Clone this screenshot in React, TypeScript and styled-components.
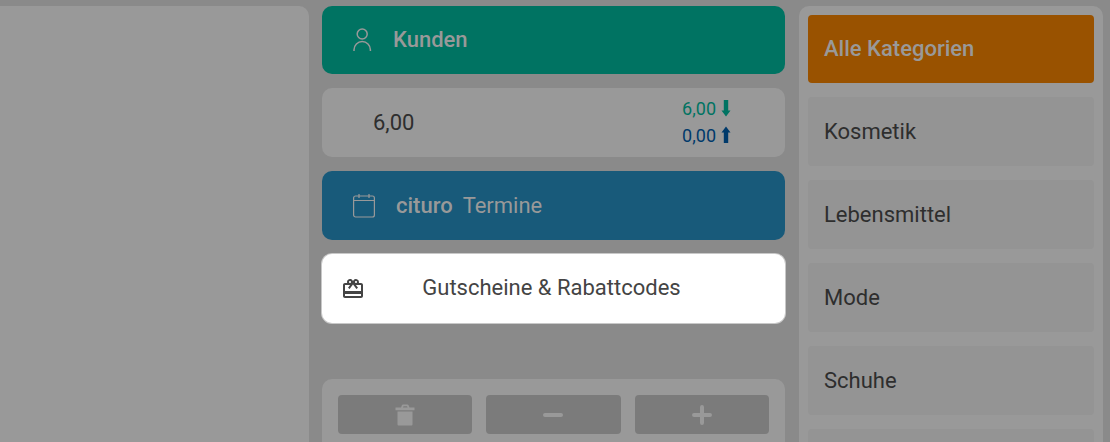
import React from "react";
import styled, { createGlobalStyle } from "styled-components";
import { MdRedeem } from "react-icons/md";

const GlobalStyle = createGlobalStyle`
  *, *::before, *::after { box-sizing: border-box; }
  body {
    margin: 0;
    background: #8a8a8a;
    color: #2e2e2e;
    font-family: Roboto, "Liberation Sans", sans-serif;
    overflow: hidden;
  }
  button { font: inherit; color: inherit; border: 0; cursor: pointer; }
  svg { display: block; flex: none; }
`;

const Page = styled.main`
  display: grid;
  grid-template-columns: 309fr 464fr 304fr;
  column-gap: 13px;
  height: 100vh;
  padding: 6px 7px 0 0;
`;

const Receipt = styled.section`
  background: #999;
  border-radius: 0 10px 0 0;
`;

const Middle = styled.div`
  display: flex;
  flex-direction: column;
  gap: 14px;
  min-width: 0;
  min-height: 0;
  padding-right: 1px;
`;

const ActionButton = styled.button<{ $bg: string }>`
  display: flex;
  align-items: center;
  flex: none;
  height: 68px;
  padding: 0 30px;
  border-radius: 10px;
  background: ${(p) => p.$bg};
  color: #999;
  font-size: 22px;
  line-height: 26px;
  text-align: left;
`;

const AppointmentButton = styled(ActionButton)`
  height: 69px;
  gap: 10px;
`;

const Label = styled.span`
  margin-left: 20px;
  font-weight: 500;
`;

const Brand = styled.strong`
  margin-left: 10px;
  font-weight: 500;
`;

const Totals = styled.section`
  display: flex;
  align-items: center;
  justify-content: space-between;
  flex: none;
  height: 69px;
  padding: 0 54px 0 51px;
  border-radius: 10px;
  background: #999;
`;

const Sum = styled.span`
  font-size: 22px;
  line-height: 26px;
`;

const Flows = styled.div`
  display: flex;
  flex-direction: column;
  padding-bottom: 2px;
`;

const Flow = styled.span<{ $color: string }>`
  display: flex;
  align-items: center;
  gap: 5px;
  color: ${(p) => p.$color};
  font-size: 18px;
  line-height: 27px;
`;

const VoucherButton = styled.button`
  display: flex;
  align-items: center;
  flex: none;
  height: 69px;
  padding: 0 19px;
  border-radius: 10px;
  background: #fff;
  box-shadow: 0 0 0 1px #c8c8c8;
  color: #444;
  font-size: 22px;
  line-height: 26px;
`;

const VoucherLabel = styled.span`
  flex: 1;
  padding: 0 28px 2px 0;
  text-align: center;
`;

const Editor = styled.section`
  display: grid;
  grid-template-columns: repeat(3, 1fr);
  gap: 14px;
  align-content: start;
  flex: 1;
  margin-top: 42px;
  padding: 16px;
  border-radius: 10px 10px 0 0;
  background: #999;
`;

const ToolButton = styled.button`
  display: flex;
  align-items: center;
  justify-content: center;
  height: 39px;
  padding: 0;
  border-radius: 4px;
  background: #7b7b7b;
  color: #999;
`;

const Categories = styled.nav`
  display: flex;
  flex-direction: column;
  gap: 14px;
  min-height: 0;
  padding: 9px 9px 0;
  border-radius: 10px 10px 0 0;
  background: #999;
  overflow: hidden;
`;

const Category = styled.button<{ $active?: boolean }>`
  flex: none;
  height: ${(p) => (p.$active ? 68 : 69)}px;
  padding: 0 16px;
  border-radius: 4px;
  background: ${(p) => (p.$active ? "#995200" : "#949494")};
  color: ${(p) => (p.$active ? "#999" : "#2e2e2e")};
  font-size: 22px;
  font-weight: ${(p) => (p.$active ? 500 : 400)};
  line-height: 26px;
  text-align: left;
`;

const CustomerIcon = () => (
  <svg width="21" height="24" viewBox="0 0 21 24" fill="none" stroke="currentColor" strokeWidth="1.5" aria-hidden="true">
    <circle cx="10.2" cy="6" r="5" />
    <path d="M2 23v-1.200a8.200 8.200 0 0 1 16.400 0V23" />
  </svg>
);

const CalendarIcon = () => (
  <svg width="24" height="24" viewBox="0 0 24 24" fill="none" stroke="currentColor" strokeWidth="1.200" aria-hidden="true">
    <rect x="1.6" y="2" width="20.8" height="21" rx="2" />
    <path d="M1.6 6.500h20.800M7 0v4M17 0v4" />
  </svg>
);

const Arrow = ({ up = false }: { up?: boolean }) => (
  <svg width="10" height="18" viewBox="0 0 10 18" fill="currentColor" aria-hidden="true">
    {up ? (
      <path d="M5 .5 9.500 6.500H7.200V17H2.800V6.500H.5Z" />
    ) : (
      <path d="M2.800 1H7.200V11.500H9.500L5 17.500.5 11.500H2.800Z" />
    )}
  </svg>
);

const TrashIcon = () => (
  <svg width="20" height="22" viewBox="0 0 20 22" fill="currentColor" aria-hidden="true">
    <path fillRule="evenodd" d="M.5 3.500H6L7 1Q7.300.5 8 .5H12.500Q13.200.5 13.500 1L14.500 3.500H19.500V6.300H.5ZM8 3.500H12.500L12 2.300H8.500Z" />
    <path d="M2.500 7.500H17.500V20.500Q17.500 21.500 16.500 21.500H3.500Q2.500 21.500 2.500 20.500Z" />
  </svg>
);

const MinusIcon = () => (
  <svg width="20" height="20" viewBox="0 0 20 20" stroke="currentColor" strokeWidth="4" strokeLinecap="round" aria-hidden="true">
    <path d="M2 10H18" />
  </svg>
);

const PlusIcon = () => (
  <svg width="20" height="20" viewBox="0 0 20 20" stroke="currentColor" strokeWidth="4" strokeLinecap="round" aria-hidden="true">
    <path d="M2 10H18M10 2V18" />
  </svg>
);

const categories = ["Alle Kategorien", "Kosmetik", "Lebensmittel", "Mode", "Schuhe"];

export default function App() {
  return (
    <>
      <GlobalStyle />
      <Page>
        <Receipt />
        <Middle>
          <ActionButton $bg="#007362">
            <CustomerIcon />
            <Label>Kunden</Label>
          </ActionButton>
          <Totals>
            <Sum>6,00</Sum>
            <Flows>
              <Flow $color="#007362">
                6,00 <Arrow />
              </Flow>
              <Flow $color="#003a6b">
                0,00 <Arrow up />
              </Flow>
            </Flows>
          </Totals>
          <AppointmentButton $bg="#185a7a">
            <CalendarIcon />
            <Brand>cituro</Brand>
            <span>Termine</span>
          </AppointmentButton>
          <VoucherButton>
            <MdRedeem size={24} aria-hidden="true" />
            <VoucherLabel>Gutscheine &amp; Rabattcodes</VoucherLabel>
          </VoucherButton>
          <Editor>
            <ToolButton aria-label="Löschen">
              <TrashIcon />
            </ToolButton>
            <ToolButton aria-label="Weniger">
              <MinusIcon />
            </ToolButton>
            <ToolButton aria-label="Mehr">
              <PlusIcon />
            </ToolButton>
          </Editor>
        </Middle>
        <Categories>
          {categories.map((name, index) => (
            <Category key={name} $active={index === 0}>
              {name}
            </Category>
          ))}
          <Category aria-label="Weitere Kategorie" />
        </Categories>
      </Page>
    </>
  );
}
